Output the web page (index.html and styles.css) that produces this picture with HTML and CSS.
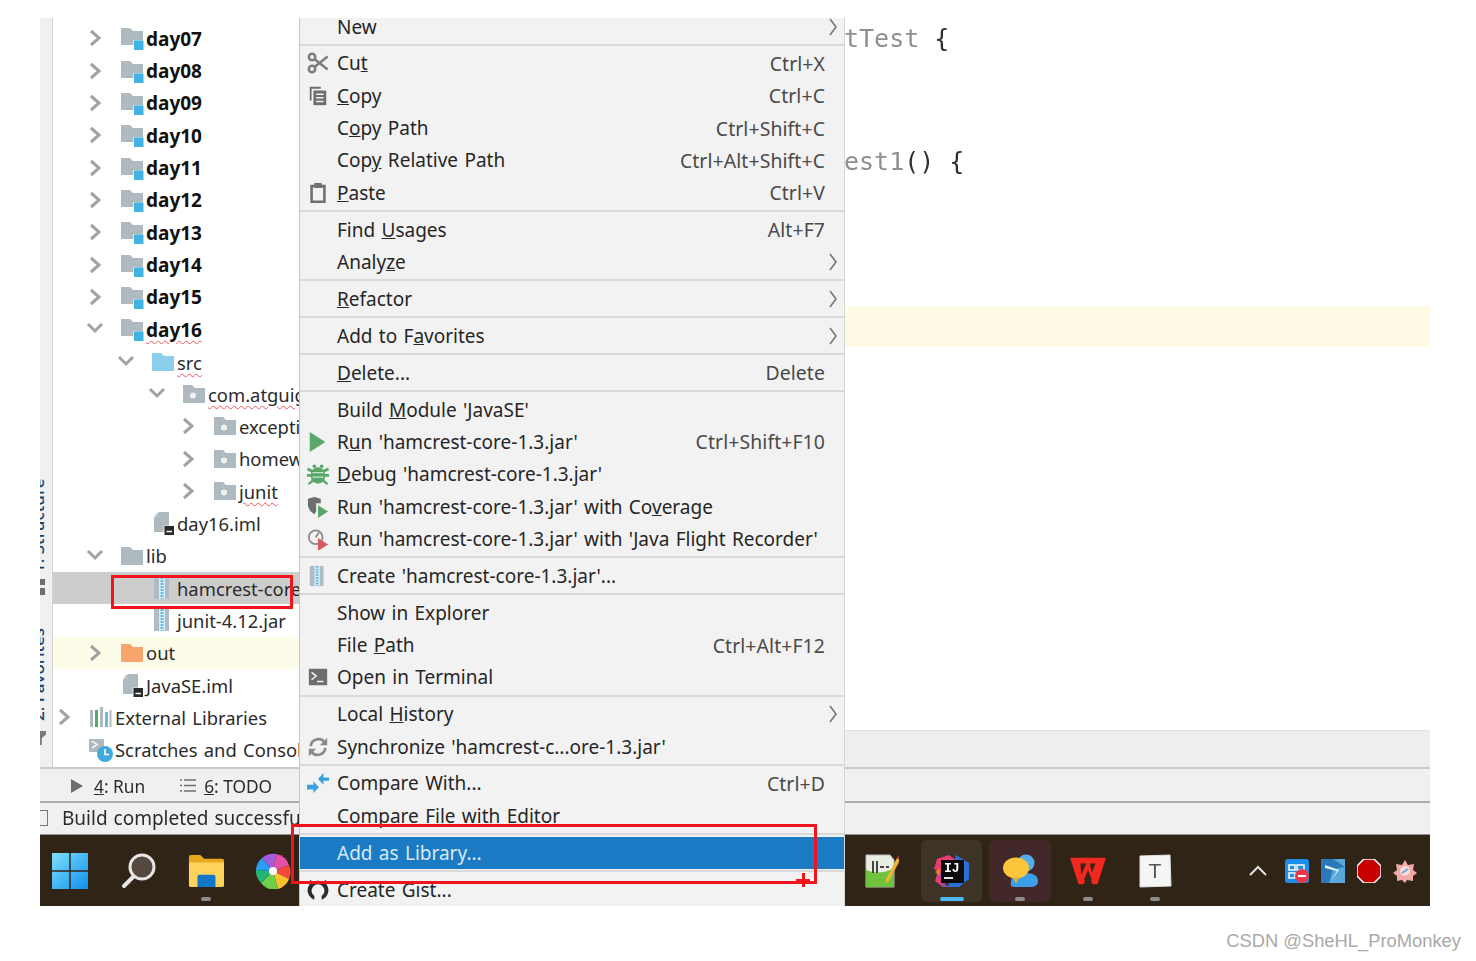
FILE: index.html
```html
<!DOCTYPE html>
<html lang="en">
<head>
<meta charset="utf-8">
<title>IDE context menu</title>
<link rel="stylesheet" href="styles.css">
</head>
<body>
<svg class="sprite" aria-hidden="true">
  <defs>
    <symbol id="chev-r" viewBox="0 0 20 20"><path d="M6 3l8 7-8 7" fill="none" stroke="#a2a2a2" stroke-width="3"/></symbol>
    <symbol id="chev-d" viewBox="0 0 20 20"><path d="M3 5l7 7 7-7" fill="none" stroke="#a2a2a2" stroke-width="3"/></symbol>
    <symbol id="sub" viewBox="0 0 10 18"><path d="M2 1l6 8-6 8" fill="none" stroke="#777" stroke-width="1.6"/></symbol>
    <symbol id="module" viewBox="0 0 24 24"><path d="M1 2h9l3 3h10v14H1z" fill="#aeb9c0"/><path d="M13 14h11v10H13z" fill="#fff" opacity=".6"/><path d="M14 14.500h9.500v9.500H14z" fill="#3fb4e2"/></symbol>
    <symbol id="f-src" viewBox="0 0 24 24"><path d="M1 3h9l3 3h10v15H1z" fill="#8ad0ec"/></symbol>
    <symbol id="f-lib" viewBox="0 0 24 24"><path d="M1 3h9l3 3h10v15H1z" fill="#aeb9c0"/></symbol>
    <symbol id="f-out" viewBox="0 0 24 24"><path d="M1 3h9l3 3h10v15H1z" fill="#f9a56e"/></symbol>
    <symbol id="f-pkg" viewBox="0 0 24 24"><path d="M1 3h9l3 3h10v15H1z" fill="#aeb9c0"/><circle cx="11" cy="13.500" r="3" fill="#eef2f4"/></symbol>
    <symbol id="iml" viewBox="0 0 24 24"><path d="M8 1h10v20H3V7z" fill="#aeb9c0"/><path d="M3 5.500L7 1v4.500z" fill="#c4ccd1"/><path d="M12.500 14.500H24V24H12.500z" fill="#fff" opacity=".7"/><path d="M13.500 15H23v9h-9.500z" fill="#2a2a2a"/><path d="M15.500 20.500h5.500" stroke="#fff" stroke-width="1.500"/></symbol>
    <symbol id="jar" viewBox="0 0 24 24"><path d="M3 1h15v22H3z" fill="#aebcc4"/><path d="M8 1h6v22H8z" fill="#d8eaf2"/><path d="M11 1v22" stroke="#6cbce0" stroke-width="3" stroke-dasharray="2 1"/></symbol>
    <symbol id="scissors" viewBox="0 0 24 24"><g fill="none" stroke="#7d7d7d" stroke-width="2.800"><circle cx="5.500" cy="5.500" r="3.500"/><circle cx="5.500" cy="18.500" r="3.500"/><path d="M8.500 8l14 11M8.500 16l14-11"/></g></symbol>
    <symbol id="copy" viewBox="0 0 24 24"><path d="M3 2h12v2H5v13H3z" fill="#6e6e6e"/><path d="M7 6h14v16H7z" fill="#6e6e6e"/><path d="M10 10h8M10 14h8M10 18h8" stroke="#f2f2f2" stroke-width="1.600"/></symbol>
    <symbol id="paste" viewBox="0 0 24 24"><path d="M5 4.500h14v17H5z" fill="none" stroke="#6e6e6e" stroke-width="2.800"/><path d="M8 1h8v5.500H8z" fill="#6e6e6e"/></symbol>
    <symbol id="run" viewBox="0 0 24 24"><path d="M3 1l17 11L3 23z" fill="#59a869"/></symbol>
    <symbol id="bug" viewBox="0 0 24 24"><g fill="#59a869"><ellipse cx="12" cy="13.500" rx="8" ry="9"/><path d="M1 5l6 3-1 3-6-3zM23 5l-6 3 1 3 6-3zM0 12h6v3H0zM18 12h6v3h-6zM1 22l6-5 1 3-6 4zM23 22l-6-5-1 3 6 4z"/><circle cx="8" cy="3.500" r="2"/><circle cx="16" cy="3.500" r="2"/></g><path d="M6 10.500h12M6 15.500h12" stroke="#c9e3cf" stroke-width="1.300"/></symbol>
    <symbol id="cover" viewBox="0 0 24 24"><path d="M1 3l7-2 7 2v5h-5v9l-2 3c-4-3-7-6-7-11z" fill="#6e6e6e"/><path d="M12 10l11 7-11 7z" fill="#59a869"/></symbol>
    <symbol id="flight" viewBox="0 0 24 24"><circle cx="9.500" cy="10" r="7.500" fill="none" stroke="#8a8a8a" stroke-width="2"/><path d="M9.500 10L13 5" stroke="#8a8a8a" stroke-width="2"/><path d="M12 11l11 7-11 7z" fill="#db5860"/></symbol>
    <symbol id="terminal" viewBox="0 0 24 24"><path d="M2 3h20v18H2z" fill="#6e6e6e"/><path d="M5 7l5 4-5 4M11 17h7" fill="none" stroke="#f2f2f2" stroke-width="1.600"/></symbol>
    <symbol id="sync" viewBox="0 0 24 24"><g fill="none" stroke="#8a8a8a" stroke-width="3"><path d="M4 11a8.500 8.500 0 0 1 15-4.500"/><path d="M20 13a8.500 8.500 0 0 1-15 4.500"/></g><path d="M22 2v8h-8zM2 22v-8h8z" fill="#8a8a8a"/></symbol>
    <symbol id="compare" viewBox="0 0 24 24"><path d="M0 14h7v-4l6 6.500L7 23v-4H0zM24 6h-6V1l-6 6.500 6 6.500V9.500h6z" fill="#3d9fdc"/></symbol>
    <symbol id="github" viewBox="0 0 24 24"><path d="M8 22.500A10.800 10.800 0 0 1 3.500 5L3 1l4.500 2a11 11 0 0 1 9 0L21 1l-.5 4A10.800 10.800 0 0 1 16 22.500V18.500a7 7 0 1 0-8 0z" fill="#2b2b2b"/></symbol>
  </defs>
</svg>

<div class="page">
  <div class="shot">
    <div class="main">
      <aside class="rail">
        <span class="rail-text">1: Structure</span>
        <span class="rail-grip"></span>
        <span class="rail-text rail-fav">2: Favorites</span>
        <span class="rail-star"></span>
      </aside>

      <nav class="tree">
        <div class="row d0"><svg class="chev"><use href="#chev-r"/></svg><svg class="ico"><use href="#module"/></svg><b>day07</b></div>
        <div class="row d0"><svg class="chev"><use href="#chev-r"/></svg><svg class="ico"><use href="#module"/></svg><b>day08</b></div>
        <div class="row d0"><svg class="chev"><use href="#chev-r"/></svg><svg class="ico"><use href="#module"/></svg><b>day09</b></div>
        <div class="row d0"><svg class="chev"><use href="#chev-r"/></svg><svg class="ico"><use href="#module"/></svg><b>day10</b></div>
        <div class="row d0"><svg class="chev"><use href="#chev-r"/></svg><svg class="ico"><use href="#module"/></svg><b>day11</b></div>
        <div class="row d0"><svg class="chev"><use href="#chev-r"/></svg><svg class="ico"><use href="#module"/></svg><b>day12</b></div>
        <div class="row d0"><svg class="chev"><use href="#chev-r"/></svg><svg class="ico"><use href="#module"/></svg><b>day13</b></div>
        <div class="row d0"><svg class="chev"><use href="#chev-r"/></svg><svg class="ico"><use href="#module"/></svg><b>day14</b></div>
        <div class="row d0"><svg class="chev"><use href="#chev-r"/></svg><svg class="ico"><use href="#module"/></svg><b>day15</b></div>
        <div class="row d0"><svg class="chev"><use href="#chev-d"/></svg><svg class="ico"><use href="#module"/></svg><b class="err">day16</b></div>
        <div class="row d1"><svg class="chev"><use href="#chev-d"/></svg><svg class="ico"><use href="#f-src"/></svg><span class="err">src</span></div>
        <div class="row d2"><svg class="chev"><use href="#chev-d"/></svg><svg class="ico"><use href="#f-pkg"/></svg><span class="err">com.atguigu</span></div>
        <div class="row d3"><svg class="chev"><use href="#chev-r"/></svg><svg class="ico"><use href="#f-pkg"/></svg><span>exception</span></div>
        <div class="row d3"><svg class="chev"><use href="#chev-r"/></svg><svg class="ico"><use href="#f-pkg"/></svg><span>homework</span></div>
        <div class="row d3"><svg class="chev"><use href="#chev-r"/></svg><svg class="ico"><use href="#f-pkg"/></svg><span class="err">junit</span></div>
        <div class="row d1"><span class="chev"></span><svg class="ico"><use href="#iml"/></svg><span>day16.iml</span></div>
        <div class="row d0"><svg class="chev"><use href="#chev-d"/></svg><svg class="ico"><use href="#f-lib"/></svg><span>lib</span></div>
        <div class="row d1 selected"><span class="chev"></span><svg class="ico"><use href="#jar"/></svg><span>hamcrest-core-1.3.jar</span></div>
        <div class="row d1"><span class="chev"></span><svg class="ico"><use href="#jar"/></svg><span>junit-4.12.jar</span></div>
        <div class="row d0 excluded"><svg class="chev"><use href="#chev-r"/></svg><svg class="ico"><use href="#f-out"/></svg><span>out</span></div>
        <div class="row d0"><span class="chev"></span><svg class="ico"><use href="#iml"/></svg><span>JavaSE.iml</span></div>
        <div class="row dx"><svg class="chev"><use href="#chev-r"/></svg>
          <svg class="ico" viewBox="0 0 24 24"><path d="M1 5h3v17H1z" fill="#aeb9c0"/><path d="M6 5h3v17H6z" fill="#59a869"/><path d="M11 2h3v20h-3z" fill="#aeb9c0"/><path d="M16 7h3v15h-3z" fill="#6cb8e0"/><path d="M20.500 5h2v17h-2z" fill="#aeb9c0"/></svg>
          <span>External Libraries</span></div>
        <div class="row dx"><span class="chev"></span>
          <svg class="ico" viewBox="0 0 24 24"><path d="M0 1h15v13H0z" fill="#aeb9c0"/><path d="M3 3l5 3.500L3 10" fill="none" stroke="#fff" stroke-width="1.500"/><circle cx="16" cy="16" r="8" fill="#3fa9e0"/><path d="M16 11v5.500h4" fill="none" stroke="#fff" stroke-width="1.600"/></svg>
          <span>Scratches and Consoles</span></div>
      </nav>

      <section class="work">
        <div class="editor">
          <div class="code"><span class="dim">tTest</span> <span class="brace">{</span></div>
          <div class="code"></div>
          <div class="code"></div>
          <div class="code"><span class="dim">est1</span><span class="brace">() {</span></div>
          <div class="code"></div>
          <div class="code"></div>
          <div class="code"></div>
          <div class="code current"></div>
        </div>
        <div class="band"></div>
      </section>
    </div>

    <div class="toolbar">
      <svg class="tool-run" viewBox="0 0 12 14"><path d="M0 0l12 7-12 7z" fill="#6e6e6e"/></svg>
      <span class="tool"><u>4</u>: Run</span>
      <svg class="tool-list" viewBox="0 0 16 13"><path d="M0 1h2M0 6.500h2M0 12h2M4 1h12M4 6.500h12M4 12h12" stroke="#6e6e6e" stroke-width="1.600"/></svg>
      <span class="tool"><u>6</u>: TODO</span>
    </div>

    <div class="status">
      <span class="status-box"></span>
      <span>Build completed successfully</span>
    </div>

    <div class="taskbar">
      <div class="slot">
        <svg class="tb" viewBox="0 0 36 36"><defs><linearGradient id="win" x1="0" y1="0" x2="1" y2="1"><stop offset="0" stop-color="#7fe0fb"/><stop offset="1" stop-color="#0f8ff0"/></linearGradient></defs><path d="M0 0h17.300v17.300H0zM18.700 0H36v17.300H18.700zM0 18.700h17.300V36H0zM18.700 18.700H36V36H18.700z" fill="url(#win)"/></svg>
      </div>
      <div class="slot search">
        <svg class="tb" viewBox="0 0 36 36"><circle cx="21" cy="14" r="12" fill="#55493f" stroke="#e6e6e6" stroke-width="3"/><path d="M12 24L3 33" stroke="#e6e6e6" stroke-width="4" stroke-linecap="round"/></svg>
      </div>
      <div class="slot dot">
        <svg class="tb" viewBox="0 0 38 36"><path d="M1 3q0-2 2-2h10l4 4h19q2 0 2 2v4H1z" fill="#e8a91e"/><path d="M1 9h37v24q0 2-2 2H3q-2 0-2-2z" fill="#fdd35c"/><path d="M10 35V24q0-2 2-2h15q2 0 2 2v11z" fill="#1077c8"/></svg>
      </div>
      <div class="slot">
        <svg class="tb" viewBox="0 0 36 36"><path d="M18 18L7 5a17 17 0 0 1 14-4z" fill="#a25ce0"/><path d="M18 18L21 1a17 17 0 0 1 13 11z" fill="#e44fa8"/><path d="M18 18L34 12a17 17 0 0 1 0 14z" fill="#ef4a3a"/><path d="M18 18L34 26a17 17 0 0 1-11 10z" fill="#fbc02d"/><path d="M18 18L23 36A17 17 0 0 1 6 30z" fill="#6ed04a"/><path d="M18 18L6 30A17 17 0 0 1 1 17z" fill="#22b573"/><path d="M18 18L1 17A17 17 0 0 1 7 5z" fill="#2a9df4"/><circle cx="18" cy="18" r="4" fill="#fff"/></svg>
      </div>

      <div class="slot group-start">
        <svg class="tb" viewBox="0 0 36 36"><path d="M3 2h24l4 5v27H3z" fill="#e9eee4" stroke="#bbb"/><path d="M3 17q14 6 28-2v19H3z" fill="#6fc23c"/><path d="M9 8h2v12H9zM13 8h2v12h-2zM17 13h4v2h-4zM23 13h3v2h-3z" fill="#444"/><path d="M23 26L34 5l3 2-11 21-3 2z" fill="#eeb535"/><path d="M34 5l1-2 3 2-1 2z" fill="#c33"/></svg>
      </div>
      <div class="slot open-ij">
        <svg class="tb" viewBox="0 0 36 36"><path d="M3 6l12-4 8 6-14 26-8-6 3-10-4-2z" fill="#e83c72"/><path d="M5 16l6 16 7 2H8z" fill="#8d4fb0"/><path d="M22 2l13 8v16L25 34H14z" fill="#2a6fd8"/><path d="M1 19l5-4v8z" fill="#f07a2e"/><path d="M7 7h23v23H7z" fill="#0c0c0c"/><text class="ij" x="10" y="19">IJ</text><path d="M10 25h9" stroke="#fff" stroke-width="1.800"/></svg>
        <i class="ind on"></i>
      </div>
      <div class="slot open-chat">
        <svg class="tb" viewBox="0 0 36 36"><circle cx="24" cy="10" r="8.500" fill="#53aef0"/><path d="M9 33q-2-13 14-13 13 0 13 8 0 6-8 6H12z" fill="#3c9fea"/><ellipse cx="14" cy="15" rx="13" ry="10.500" fill="#fcc63a"/><path d="M11 24l3 7 3-7z" fill="#eeac28"/></svg>
        <i class="ind"></i>
      </div>
      <div class="slot dot">
        <svg class="tb" viewBox="0 0 38 36"><path d="M0 4h38l-9 28h-5l-5-9-5 9H9z" fill="#f0281e"/><path d="M11 10h6l-5 12zM21 10h6l-4 10zM15 27l4-10 4 10-3 5h-2z" fill="#34261a"/></svg>
      </div>
      <div class="slot dot">
        <svg class="tb" viewBox="0 0 36 36"><path d="M3 3l30-1 1 31-31 1z" fill="#f5f5f5" stroke="#e0e0e0"/><text class="tee" x="18" y="25">T</text></svg>
      </div>

      <div class="tray">
        <svg class="tray-chev" viewBox="0 0 20 12"><path d="M2 10l8-8 8 8" fill="none" stroke="#e0e0e0" stroke-width="2"/></svg>
        <svg class="tray-ico" viewBox="0 0 24 24"><rect width="24" height="24" rx="3" fill="#1c8fec"/><path d="M4 6h6v5H4zM12 6h7v5h-7zM4 14h6v5H4z" fill="none" stroke="#fff" stroke-width="1.500"/><circle cx="17" cy="17" r="7" fill="#e8384a"/><path d="M13 17h8" stroke="#fff" stroke-width="2"/></svg>
        <svg class="tray-ico" viewBox="0 0 24 24"><path d="M0 0h24v24H0z" fill="#58a8dc"/><path d="M0 0h12L24 8 12 10 8 24H0z" fill="#2a78b8"/><path d="M4 6l14 5-8 11 6-10L4 9z" fill="#e4f2fa"/></svg>
        <svg class="tray-ico" viewBox="0 0 24 24"><path d="M7 0h10l7 7v10l-7 7H7l-7-7V7z" fill="#c80000" stroke="#fff" stroke-width="1.500"/></svg>
        <svg class="tray-ico" viewBox="0 0 24 24"><path d="M12 1l3 5 6-1-1 6 4 3-4 3 0 5-6-1-2 3-3-3-5 1 0-5-4-3 4-3-1-6 6 1z" fill="#f2a7a7"/><circle cx="12" cy="12" r="5" fill="#f7dcdc"/><path d="M9 14l6-4" stroke="#6aa6d8" stroke-width="2"/></svg>
      </div>
    </div>

    <div class="menu">
      <div class="item top has-sub"><span class="slot-i"></span><span class="label">New</span><svg class="sub"><use href="#sub"/></svg></div>
      <div class="sep"></div>
      <div class="item"><svg class="mi"><use href="#scissors"/></svg><span class="label">Cu<u>t</u></span><span class="key">Ctrl+X</span></div>
      <div class="item"><svg class="mi"><use href="#copy"/></svg><span class="label"><u>C</u>opy</span><span class="key">Ctrl+C</span></div>
      <div class="item"><span class="slot-i"></span><span class="label">C<u>o</u>py Path</span><span class="key">Ctrl+Shift+C</span></div>
      <div class="item"><span class="slot-i"></span><span class="label">Cop<u>y</u> Relative Path</span><span class="key">Ctrl+Alt+Shift+C</span></div>
      <div class="item"><svg class="mi"><use href="#paste"/></svg><span class="label"><u>P</u>aste</span><span class="key">Ctrl+V</span></div>
      <div class="sep"></div>
      <div class="item"><span class="slot-i"></span><span class="label">Find <u>U</u>sages</span><span class="key">Alt+F7</span></div>
      <div class="item has-sub"><span class="slot-i"></span><span class="label">Analy<u>z</u>e</span><svg class="sub"><use href="#sub"/></svg></div>
      <div class="sep"></div>
      <div class="item has-sub"><span class="slot-i"></span><span class="label"><u>R</u>efactor</span><svg class="sub"><use href="#sub"/></svg></div>
      <div class="sep"></div>
      <div class="item has-sub"><span class="slot-i"></span><span class="label">Add to F<u>a</u>vorites</span><svg class="sub"><use href="#sub"/></svg></div>
      <div class="sep"></div>
      <div class="item"><span class="slot-i"></span><span class="label"><u>D</u>elete...</span><span class="key">Delete</span></div>
      <div class="sep"></div>
      <div class="item"><span class="slot-i"></span><span class="label">Build <u>M</u>odule 'JavaSE'</span></div>
      <div class="item"><svg class="mi"><use href="#run"/></svg><span class="label">R<u>u</u>n 'hamcrest-core-1.3.jar'</span><span class="key">Ctrl+Shift+F10</span></div>
      <div class="item"><svg class="mi"><use href="#bug"/></svg><span class="label"><u>D</u>ebug 'hamcrest-core-1.3.jar'</span></div>
      <div class="item"><svg class="mi"><use href="#cover"/></svg><span class="label">Run 'hamcrest-core-1.3.jar' with Co<u>v</u>erage</span></div>
      <div class="item"><svg class="mi"><use href="#flight"/></svg><span class="label">Run 'hamcrest-core-1.3.jar' with 'Java Flight Recorder'</span></div>
      <div class="sep"></div>
      <div class="item"><svg class="mi"><use href="#jar"/></svg><span class="label">Create 'hamcrest-core-1.3.jar'...</span></div>
      <div class="sep"></div>
      <div class="item"><span class="slot-i"></span><span class="label">Show in Explorer</span></div>
      <div class="item"><span class="slot-i"></span><span class="label">File <u>P</u>ath</span><span class="key">Ctrl+Alt+F12</span></div>
      <div class="item"><svg class="mi"><use href="#terminal"/></svg><span class="label">Open in Terminal</span></div>
      <div class="sep"></div>
      <div class="item has-sub"><span class="slot-i"></span><span class="label">Local <u>H</u>istory</span><svg class="sub"><use href="#sub"/></svg></div>
      <div class="item"><svg class="mi"><use href="#sync"/></svg><span class="label">Synchronize 'hamcrest-c...ore-1.3.jar'</span></div>
      <div class="sep"></div>
      <div class="item"><svg class="mi"><use href="#compare"/></svg><span class="label">Compare With...</span><span class="key">Ctrl+D</span></div>
      <div class="item"><span class="slot-i"></span><span class="label">Compare File with Editor</span></div>
      <div class="sep"></div>
      <div class="item active"><span class="slot-i"></span><span class="label">Add as Library...</span></div>
      <div class="sep"></div>
      <div class="item"><svg class="mi"><use href="#github"/></svg><span class="label">Create Gist...</span></div>
    </div>

    <div class="mark mark-row"></div>
    <div class="mark mark-item"></div>
    <div class="mark-plus"></div>
  </div>
  <footer class="credit">CSDN @SheHL_ProMonkey</footer>
</div>
</body>
</html>
```
FILE: styles.css
```css
* { box-sizing: border-box; }

html, body { margin: 0; background: #fff; }

body {
  font-family: "Noto Sans", "Open Sans", sans-serif;
  color: #2b2b2b;
  overflow: hidden;
}

.sprite { position: absolute; width: 0; height: 0; }

.page { width: 1476px; height: 961px; padding: 18px 46px 0 40px; }

.shot {
  position: relative;
  width: 1390px;
  height: 888px;
  display: flex;
  flex-direction: column;
  filter: blur(0.55px);
}

/* upper area */
.main {
  display: flex;
  height: 751px;
  border-bottom: 2px solid #c9c9c9;
}

.rail {
  width: 13px;
  flex: none;
  display: flex;
  flex-direction: column;
  align-items: flex-start;
  padding-top: 459px;
  background: #f0f0f0;
  border-right: 1px solid #d2d2d2;
  overflow: hidden;
}

.rail-text {
  writing-mode: vertical-rl;
  transform: rotate(180deg);
  font-size: 17px;
  font-weight: 500;
  line-height: 20px;
  color: #1f3f6c;
  margin-left: -12px;
  white-space: nowrap;
  height: 96px;
  text-align: left;
}

.rail-fav { margin-top: 32px; height: 94px; }

.rail-grip {
  width: 5px;
  height: 16px;
  margin-top: 6px;
  background: linear-gradient(#6e6e6e 0 6px, transparent 6px 9px, #6e6e6e 9px);
}

.rail-star {
  width: 6px;
  height: 14px;
  margin-top: 10px;
  background: #7a7a7a;
  clip-path: polygon(0 0, 100% 0, 100% 25%, 30% 50%, 30% 100%, 0 100%);
}

.tree {
  width: 246px;
  flex: none;
  padding-top: 4px;
  background: #fff;
  overflow: hidden;
  font-size: 18.4px;
  word-spacing: 1.5px;
}

.row {
  display: flex;
  align-items: center;
  height: 32.35px;
  white-space: nowrap;
}

.row b { font-size: 19px; font-weight: 700; color: #111; margin-left: 2px; padding-top: 1px; }
.row span:last-child { margin-left: 2px; }
.row .err { padding-top: 1px; }

.d0 { padding-left: 32px; }
.d1 { padding-left: 63px; }
.d2 { padding-left: 94px; }
.d3 { padding-left: 125px; }
.dx { padding-left: 1px; }

.selected { background: #cdcdcd; }
.excluded { background: #fdfce9; }

.chev { flex: none; width: 20px; height: 20px; margin-right: 15px; }
.ico { flex: none; width: 24px; height: 24px; }

.err {
  text-decoration: underline wavy #f2555a 1px;
  text-underline-offset: 3px;
}

/* editor */
.work {
  flex: 1;
  min-width: 0;
  display: flex;
  flex-direction: column;
}

.editor { flex: 1; min-height: 0; overflow: hidden; }

.code {
  height: 41.1px;
  padding-left: 545px;
  font-family: "DejaVu Sans Mono", monospace;
  font-size: 25px;
  line-height: 41.1px;
  white-space: pre;
}

.current { background: #fffae3; }
.dim { color: #8f8f8f; }
.brace { color: #33302c; }

.band {
  height: 37px;
  flex: none;
  background: #eeeeee;
  border-top: 1px solid #e2e2e2;
}

/* bars */
.toolbar {
  height: 34px;
  flex: none;
  display: flex;
  align-items: center;
  padding-left: 31px;
  background: #f0f0f0;
  border-bottom: 2px solid #ababab;
  font-size: 17.3px;
}

.tool { padding-top: 3px; }
.tool-run { width: 12px; height: 14px; margin-right: 11px; margin-top: 2px; }
.tool-list { width: 16px; height: 13px; margin-left: 35px; margin-right: 8px; }

.status {
  height: 31px;
  flex: none;
  display: flex;
  align-items: center;
  padding-bottom: 2px;
  background: #f0f0f0;
  font-size: 19px;
  word-spacing: 1px;
}

.status-box {
  width: 8px;
  height: 16px;
  margin-right: 14px;
  border: 1.5px solid #777;
  border-left: 0;
}

/* taskbar */
.taskbar {
  height: 72px;
  flex: none;
  display: flex;
  align-items: center;
  gap: 7px;
  background: #2f2416;
  border-top: 1px solid #8f8f8f;
}

.slot {
  position: relative;
  width: 60px;
  height: 62px;
  flex: none;
  display: flex;
  align-items: center;
  justify-content: center;
  border-radius: 6px;
}

.tb { width: 36px; height: 36px; }

.search { margin-left: 2px; }
.group-start { margin-left: 541px; margin-right: 3px; }

.open-ij { background: #3d3327; width: 61px; }
.open-chat { background: #43282a; width: 62px; }

.dot::after, .ind {
  content: "";
  position: absolute;
  left: 50%;
  bottom: 1px;
  width: 10px;
  height: 4px;
  margin-left: -5px;
  border-radius: 2px;
  background: #8c8c8c;
}

.ind.on { width: 24px; margin-left: -12px; background: #4cb6f6; }

.ij { font-family: "Liberation Mono", monospace; font-size: 13px; font-weight: 700; fill: #fff; }
.tee { font-family: "Liberation Sans", sans-serif; font-size: 21px; fill: #555; text-anchor: middle; }

.tray {
  margin-left: auto;
  padding-right: 13px;
  display: flex;
  align-items: center;
  gap: 12px;
}

.tray-chev { width: 20px; height: 12px; margin-right: 5px; }
.tray-ico { width: 24px; height: 24px; }

/* context menu */
.menu {
  position: absolute;
  left: 259px;
  top: 0;
  width: 546px;
  height: 888px;
  overflow: hidden;
  background: #f2f2f2;
  border-left: 1px solid #c6c6c6;
  border-right: 1px solid #d6d6d6;
  font-size: 19px;
  word-spacing: 1.4px;
  color: #262626;
}

.item {
  display: flex;
  align-items: center;
  height: 32.3px;
  padding-right: 19px;
  white-space: nowrap;
}

.top { margin-top: -7.6px; }
.has-sub { padding-right: 6px; }

.slot-i { width: 37px; flex: none; }
.mi { flex: none; width: 22px; height: 22px; margin: 0 8px 0 7px; }

.label { flex: 1; }
.key { color: #4a4a4a; font-size: 19.4px; letter-spacing: 0.1px; }
.sub { flex: none; width: 10px; height: 18px; }

.sep {
  height: 2px;
  margin: 1.3px 0 1.35px;
  background: #d9d9d9;
}

.active { background: #1a7bc4; color: #d9e9f6; }

/* annotations */
.mark {
  position: absolute;
  border: 3px solid #f0141e;
  pointer-events: none;
}

.mark-row { left: 71px; top: 557px; width: 182px; height: 34px; }
.mark-item { left: 251px; top: 806px; width: 526px; height: 60px; }

.mark-plus {
  position: absolute;
  left: 756px;
  top: 855px;
  width: 14px;
  height: 14px;
  background:
    linear-gradient(#f0141e, #f0141e) center / 100% 3px no-repeat,
    linear-gradient(#f0141e, #f0141e) center / 3px 100% no-repeat;
}

.credit {
  margin-top: 24px;
  margin-right: -31px;
  text-align: right;
  font-family: "Liberation Sans", sans-serif;
  font-size: 18.35px;
  line-height: 22px;
  color: #a9a9a9;
}
```
